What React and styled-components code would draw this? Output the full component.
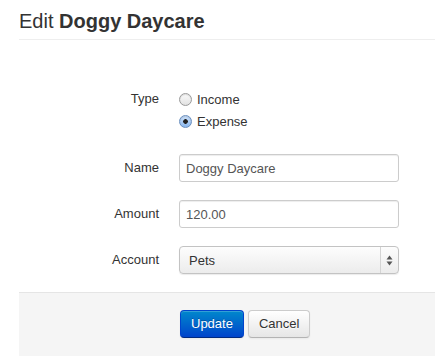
import React from 'react'
import styled, { createGlobalStyle } from 'styled-components'

const GlobalStyle = createGlobalStyle`
  body {
    margin: 0;
    background: #fff;
    font-family: "Liberation Sans", Arial, sans-serif;
    font-size: 13px;
    color: #333;
  }
`

const Page = styled.div`
  padding-left: 19px;
  width: 416px;
  height: 356px;
  overflow: hidden;
`

const Heading = styled.h3`
  margin: 6px 0 0;
  padding-bottom: 3px;
  font-size: 20px;
  line-height: 30px;
  font-weight: normal;
  color: #333;
  border-bottom: 1px solid #eee;
  strong {
    font-weight: bold;
  }
`

const Form = styled.form`
  margin: 48px 0 0;
`

const Group = styled.div`
  display: flex;
  align-items: ${(p) => (p.$top ? 'flex-start' : 'center')};
  gap: 20px;
  margin-bottom: ${(p) => p.$mb || 18}px;
`

const Label = styled.label`
  width: 140px;
  text-align: right;
  line-height: 18px;
  color: #333;
  padding-top: ${(p) => (p.$top ? 2 : 0)}px;
`

const Controls = styled.div`
  display: flex;
  flex-direction: column;
`

const RadioRow = styled.label`
  display: flex;
  align-items: center;
  height: 22px;
  gap: 5px;
  color: #333;
`

const RadioDot = styled.span`
  width: 11px;
  height: 11px;
  border-radius: 50%;
  border: 1px solid ${(p) => (p.$on ? '#6a8fbf' : '#9a9a9a')};
  background: ${(p) => (p.$on
    ? 'radial-gradient(circle at 50% 50%, #222 0 2px, transparent 2.6px), linear-gradient(#cfe3fb, #8ab7ee)'
    : 'linear-gradient(#fafafa, #e2e2e2)')};
  box-shadow: inset 0 1px 1px rgba(0,0,0,0.12);
  flex: none;
`

const Input = styled.div`
  box-sizing: border-box;
  width: 220px;
  height: 28px;
  padding: 0 6px;
  display: flex;
  align-items: center;
  border: 1px solid #ccc;
  border-radius: 3px;
  box-shadow: inset 0 1px 1px rgba(0,0,0,0.075);
  color: #555;
  background: #fff;
`

const Select = styled.div`
  box-sizing: border-box;
  width: 220px;
  height: 28px;
  display: flex;
  border: 1px solid #c3c3c3;
  border-radius: 4px;
  background: linear-gradient(#fdfdfd, #ececec);
  box-shadow: 0 1px 1px rgba(0,0,0,0.08);
  color: #333;
`

const SelectText = styled.span`
  flex: 1;
  padding-left: 9px;
  display: flex;
  align-items: center;
`

const SelectArrows = styled.span`
  width: 17px;
  border-left: 1px solid #d4d4d4;
  display: flex;
  align-items: center;
  justify-content: center;
`

const Actions = styled.div`
  display: flex;
  justify-content: flex-start;
  gap: 4px;
  padding: 17px 0 18px 161px;
  background: #f5f5f5;
  border-top: 1px solid #e5e5e5;
  height: 64px;
  box-sizing: border-box;
`

const Button = styled.button`
  box-sizing: border-box;
  height: 28px;
  padding: 0 10px;
  font-family: inherit;
  font-size: 13px;
  line-height: 18px;
  border-radius: 4px;
  cursor: pointer;
  color: ${(p) => (p.$primary ? '#fff' : '#333')};
  text-shadow: ${(p) => (p.$primary ? '0 -1px 0 rgba(0,0,0,0.25)' : '0 1px 1px rgba(255,255,255,0.75)')};
  background: ${(p) => (p.$primary
    ? 'linear-gradient(#0088cc, #0044cc)'
    : 'linear-gradient(#ffffff, #e6e6e6)')};
  border: 1px solid ${(p) => (p.$primary ? '#0044cc' : '#ccc')};
  border-bottom-color: ${(p) => (p.$primary ? '#002a80' : '#b3b3b3')};
  box-shadow: inset 0 1px 0 rgba(255,255,255,0.2), 0 1px 2px rgba(0,0,0,0.05);
`

export default function App() {
  return (
    <Page>
      <GlobalStyle />
      <Heading>
        Edit <strong>Doggy Daycare</strong>
      </Heading>
      <Form>
        <Group $top $mb={22}>
          <Label $top>Type</Label>
          <Controls>
            <RadioRow><RadioDot />Income</RadioRow>
            <RadioRow><RadioDot $on />Expense</RadioRow>
          </Controls>
        </Group>
        <Group>
          <Label>Name</Label>
          <Input>Doggy Daycare</Input>
        </Group>
        <Group>
          <Label>Amount</Label>
          <Input>120.00</Input>
        </Group>
        <Group>
          <Label>Account</Label>
          <Select>
            <SelectText>Pets</SelectText>
            <SelectArrows>
              <svg width="7" height="11" viewBox="0 0 7 11">
                <path d="M3.5 0.5 L6.5 4.5 L0.5 4.5 Z" fill="#555" />
                <path d="M3.5 10.5 L6.5 6.5 L0.5 6.5 Z" fill="#555" />
              </svg>
            </SelectArrows>
          </Select>
        </Group>
      </Form>
      <Actions>
        <Button $primary>Update</Button>
        <Button>Cancel</Button>
      </Actions>
    </Page>
  )
}
